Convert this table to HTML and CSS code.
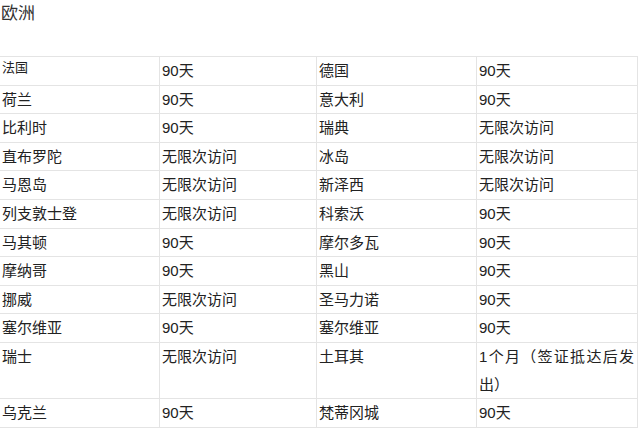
FILE: index.html
```html
<!DOCTYPE html>
<html lang="zh">
<head>
<meta charset="utf-8">
<link rel="stylesheet" href="styles.css">
</head>
<body>
<h2 class="title">欧洲</h2>
<table class="visa">
<colgroup><col class="c1"><col class="c2"><col class="c3"><col class="c4"></colgroup>
<tr><td class="small">法国</td><td>90天</td><td>德国</td><td>90天</td></tr>
<tr><td>荷兰</td><td>90天</td><td>意大利</td><td>90天</td></tr>
<tr><td>比利时</td><td>90天</td><td>瑞典</td><td>无限次访问</td></tr>
<tr><td>直布罗陀</td><td>无限次访问</td><td>冰岛</td><td>无限次访问</td></tr>
<tr><td>马恩岛</td><td>无限次访问</td><td>新泽西</td><td>无限次访问</td></tr>
<tr><td>列支敦士登</td><td>无限次访问</td><td>科索沃</td><td>90天</td></tr>
<tr><td>马其顿</td><td>90天</td><td>摩尔多瓦</td><td>90天</td></tr>
<tr><td>摩纳哥</td><td>90天</td><td>黑山</td><td>90天</td></tr>
<tr><td>挪威</td><td>无限次访问</td><td>圣马力诺</td><td>90天</td></tr>
<tr><td>塞尔维亚</td><td>90天</td><td>塞尔维亚</td><td>90天</td></tr>
<tr class="top"><td>瑞士</td><td>无限次访问</td><td>土耳其</td><td class="just">1个月（签证抵达后发出）</td></tr>
<tr><td>乌克兰</td><td>90天</td><td>梵蒂冈城</td><td>90天</td></tr>
</table>
</body>
</html>
```
FILE: styles.css
```css
html, body {
  margin: 0;
  padding: 0;
  background: #fff;
}
body {
  font-family: "Liberation Sans", "Noto Sans CJK SC", sans-serif;
  color: #222;
  width: 640px;
  height: 431px;
  overflow: hidden;
}
.title {
  margin: 0 0 28px 1px;
  font-size: 17px;
  font-weight: normal;
  line-height: 28px;
  color: #333;
}
.visa {
  border-collapse: collapse;
  table-layout: fixed;
  width: 638px;
  margin-left: -1px;
  font-size: 15px;
}
.c1 { width: 160px; }
.c2 { width: 157px; }
.c3 { width: 160px; }
.c4 { width: 161px; }
.visa td {
  border: 1px solid #e4e4e4;
  padding: 0 3px 0 2px;
  line-height: 27.6px;
  height: 27.6px;
  vertical-align: middle;
  text-align: left;
  white-space: normal;
}
.visa td.small {
  font-size: 13px;
  vertical-align: top;
  line-height: 22px;
}
.visa tr.top td {
  vertical-align: top;
}
.visa td.just {
  text-align: justify;
}
```
